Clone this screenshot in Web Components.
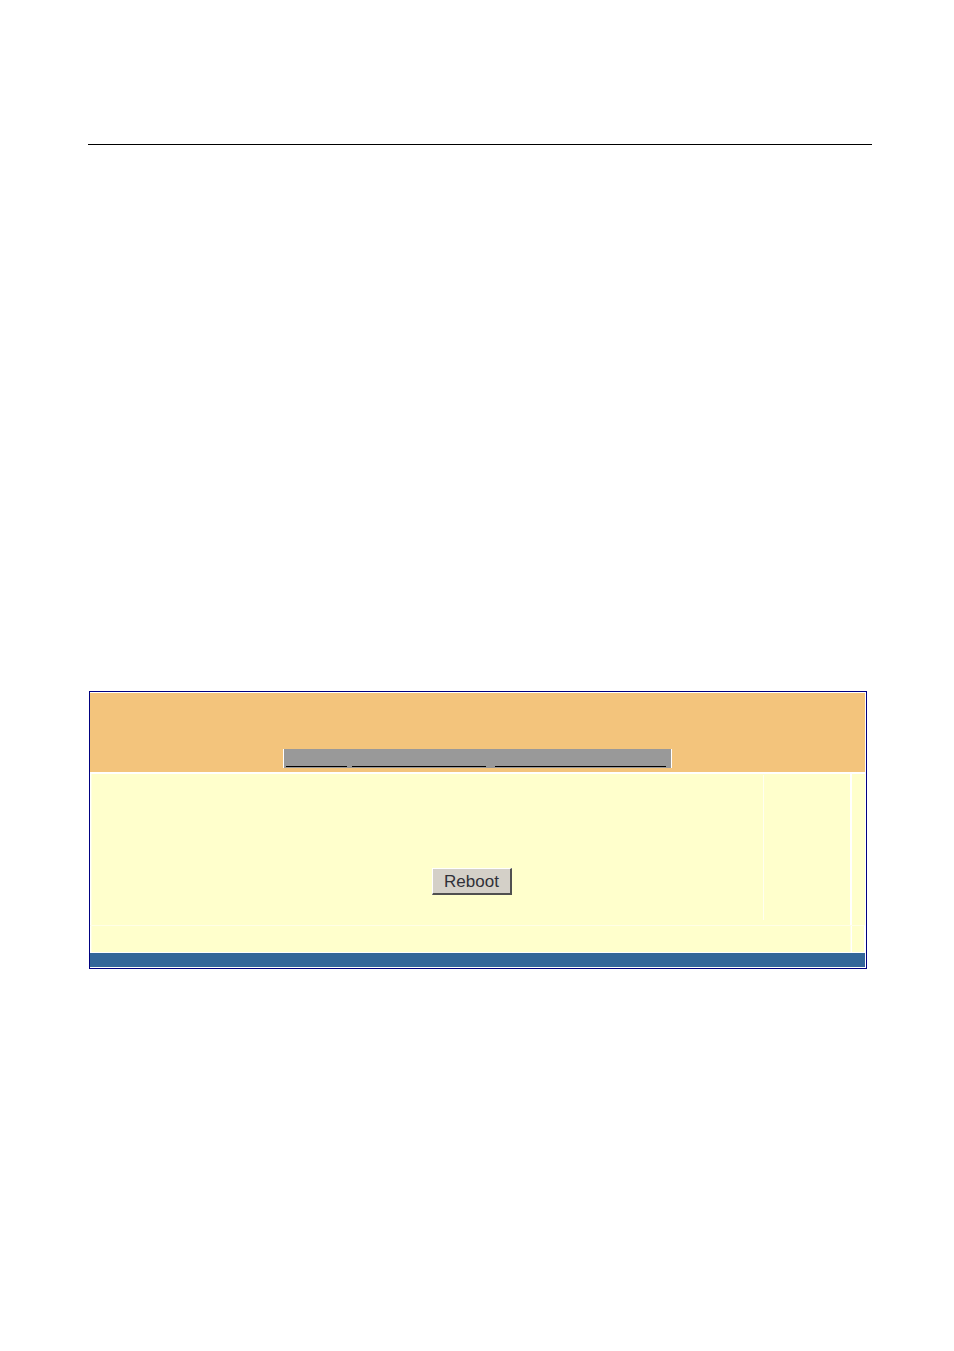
<!DOCTYPE html>
<html lang="en">
<head>
<meta charset="utf-8">
<title>Reboot</title>
<style>
body { margin: 0; background: #fff; font-family: "Liberation Sans", Arial, sans-serif; }
</style>
</head>
<body>
<doc-page>
  <device-panel>
    <nav-strip slot="nav"></nav-strip>
    <reboot-button>Reboot</reboot-button>
  </device-panel>
</doc-page>
<script>
const define = (name, markup) => {
  const template = document.createElement("template");
  template.innerHTML = markup;
  customElements.define(name, class extends HTMLElement {
    constructor() {
      super();
      this.attachShadow({ mode: "open" }).append(template.content.cloneNode(true));
    }
  });
};

define("doc-page", `
<style>
:host { display: block; box-sizing: border-box; min-height: 100vh; padding: 144px 82px 0 88px; }
hr { margin: 0; border: 0; height: 1px; background: #000; }
main { margin: 546px 5px 0 1px; }
</style>
<hr>
<main><slot></slot></main>`);

define("nav-strip", `
<style>
:host { display: block; }
nav { display: flex; box-sizing: border-box; width: 389px; height: 19px; padding: 0 5px 1px 2px;
  background: #999; border: solid #fff; border-width: 0 1px; }
a { box-sizing: border-box; border-bottom: 1px solid #000; }
.first { width: 61px; margin-right: 5px; }
.second { width: 134px; margin-right: 9px; }
.third { flex: 1; }
</style>
<nav>
  <a class="first" href="#first"></a>
  <a class="second" href="#second"></a>
  <a class="third" href="#third"></a>
</nav>`);

define("reboot-button", `
<style>
:host { display: block; }
button { display: block; box-sizing: border-box; width: 80px; height: 27px; padding: 2px 0 0; margin: 0;
  font: 17px/20px "Liberation Sans", Arial, sans-serif; color: #303038; background: #d4d0c8;
  border: solid; border-width: 1px 2px 2px 1px; border-color: #fff #505050 #505050 #fff; border-radius: 0; }
</style>
<button type="button"><slot></slot></button>`);

define("device-panel", `
<style>
:host { display: block; border: 1px solid #000080; background: #fff; padding: 1px 1px 1px 0; }
header { box-sizing: border-box; height: 79px; padding-bottom: 4px; background: #f3c47c;
  display: flex; align-items: flex-end; justify-content: center; }
.row { display: grid; padding-left: 1px; }
.upper { grid-template-columns: 1fr 13px; column-gap: 2px; padding-top: 2px; height: 151px; }
.lower { grid-template-columns: 1fr 12px; column-gap: 1px; padding: 0 1px 1px; height: 26px; }
.row > * { background: #ffffcc; }
.work { display: grid; grid-template-columns: 1fr 1px 86px; grid-template-rows: 1fr;
  border-left: 1px solid #ffffe0; padding-top: 1px; }
.line { grid-area: 1 / 2; background: #fffff0; margin-bottom: 5px; }
.action { grid-area: 1 / 1 / 2 / 4; display: flex; justify-content: center; align-items: flex-start; padding: 93px 0 0 2px; }
.seam { height: 1px; background: #ffffe6; }
.foot { border: solid #ffffe0; border-width: 0 1px; }
footer { height: 14px; background: #336699; }
</style>
<header><slot name="nav"></slot></header>
<div class="row upper">
  <section class="work"><span class="line"></span><div class="action"><slot></slot></div></section>
  <div></div>
</div>
<div class="seam"></div>
<div class="row lower"><div class="foot"></div><div></div></div>
<footer></footer>`);
</script>
</body>
</html>
